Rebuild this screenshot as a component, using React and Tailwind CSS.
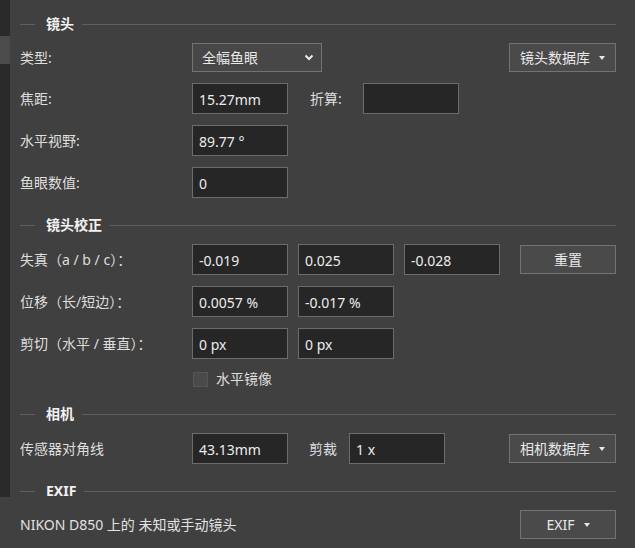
import React from 'react';

const font = { fontFamily: '"Noto Sans", "Noto Sans CJK SC", sans-serif' };

function Section({ title, className = '' }) {
  return (
    <div className={`flex items-center h-5 ${className}`}>
      <div className="w-[15px] h-px bg-[#5f5f5f]" />
      <span className="ml-[11px] mr-2 text-[14px] font-bold text-[#f2f2f2] leading-5">{title}</span>
      <div className="flex-1 h-px bg-[#5f5f5f]" />
    </div>
  );
}

function Label({ children, w = 'w-[172px]' }) {
  return <div className={`${w} shrink-0 text-[14px] text-[#dedede] leading-5 pt-[1px]`}>{children}</div>;
}

function Field({ value = '', className = 'w-[96px]' }) {
  return (
    <div className={`${className} h-[31px] shrink-0 bg-[#262626] border border-[#6c6c6c] flex items-center px-[6px] pt-[2px] text-[14px] text-[#ececec] leading-5`}>
      {value}
    </div>
  );
}

function Btn({ children, className = '' }) {
  return (
    <div className={`h-[29px] bg-[#4a4a4a] border border-[#737373] flex items-center justify-center gap-[9px] text-[14px] text-[#e8e8e8] leading-5 ${className}`}>
      {children}
    </div>
  );
}

const Caret = () => (
  <svg width="6" height="4" viewBox="0 0 6 4">
    <path d="M0 0 H6 L3 4 Z" fill="#e8e8e8" />
  </svg>
);

export default function App() {
  return (
    <div className="w-[635px] h-[548px] bg-[#404040] flex overflow-hidden" style={font}>
      <div className="w-[10px] h-[497px] bg-[#2a2a2a] shrink-0 pt-[36px]">
        <div className="h-[28px] bg-[#4b4b4b]" />
      </div>
      <div className="w-[596px] ml-[10px] pt-[14px] flex flex-col">
        <Section title="镜头" />

        <div className="flex items-center h-[31px] mt-[8px]">
          <Label>类型:</Label>
          <div className="w-[130px] h-[29px] bg-[#474747] border border-[#737373] flex items-center justify-between pl-[9px] pr-[7px] text-[14px] text-[#e8e8e8]">
            <span>全幅鱼眼</span>
            <svg width="10" height="7" viewBox="0 0 10 7">
              <path d="M1.5 1.5 L5 5 L8.5 1.5" fill="none" stroke="#ececec" strokeWidth="2" />
            </svg>
          </div>
          <div className="flex-1" />
          <Btn className="w-[107px]">镜头数据库 <Caret /></Btn>
        </div>

        <div className="flex items-center h-[31px] mt-[10px]">
          <Label>焦距:</Label>
          <Field value="15.27mm" />
          <div className="ml-[22px] w-[53px] text-[14px] text-[#dedede]">折算:</div>
          <Field />
        </div>

        <div className="flex items-center h-[31px] mt-[11px]">
          <Label>水平视野:</Label>
          <Field value="89.77 °" />
        </div>

        <div className="flex items-center h-[31px] mt-[11px]">
          <Label>鱼眼数值:</Label>
          <Field value="0" />
        </div>

        <Section title="镜头校正" className="mt-[17px]" />

        <div className="flex items-center h-[31px] mt-[9px]">
          <Label>失真（a / b / c）：</Label>
          <Field value="-0.019" />
          <Field value="0.025" className="w-[96px] ml-[10px]" />
          <Field value="-0.028" className="w-[96px] ml-[10px]" />
          <div className="flex-1" />
          <Btn className="w-[96px]">重置</Btn>
        </div>

        <div className="flex items-center h-[31px] mt-[11px]">
          <Label>位移（长/短边）：</Label>
          <Field value="0.0057 %" />
          <Field value="-0.017 %" className="w-[96px] ml-[10px]" />
        </div>

        <div className="flex items-center h-[31px] mt-[11px]">
          <Label>剪切（水平 / 垂直）：</Label>
          <Field value="0 px" />
          <Field value="0 px" className="w-[96px] ml-[10px]" />
        </div>

        <div className="flex items-center h-[16px] mt-[12px] pl-[173px]">
          <div className="w-[15px] h-[15px] bg-[#4a4a4a] border border-[#555555]" />
          <span className="ml-[8px] text-[14px] text-[#dedede] leading-5">水平镜像</span>
        </div>

        <Section title="相机" className="mt-[17px]" />

        <div className="flex items-center h-[31px] mt-[9px]">
          <Label>传感器对角线</Label>
          <Field value="43.13mm" />
          <div className="ml-[21px] w-[40px] text-[14px] text-[#dedede]">剪裁</div>
          <Field value="1 x" />
          <div className="flex-1" />
          <Btn className="w-[107px]">相机数据库 <Caret /></Btn>
        </div>

        <Section title="EXIF" className="mt-[17px]" />

        <div className="flex items-center h-[31px] mt-[8px]">
          <div className="text-[14px] text-[#e2e2e2] leading-5">NIKON D850 上的 未知或手动镜头</div>
          <div className="flex-1" />
          <Btn className="w-[96px]">EXIF <Caret /></Btn>
        </div>
      </div>
    </div>
  );
}
